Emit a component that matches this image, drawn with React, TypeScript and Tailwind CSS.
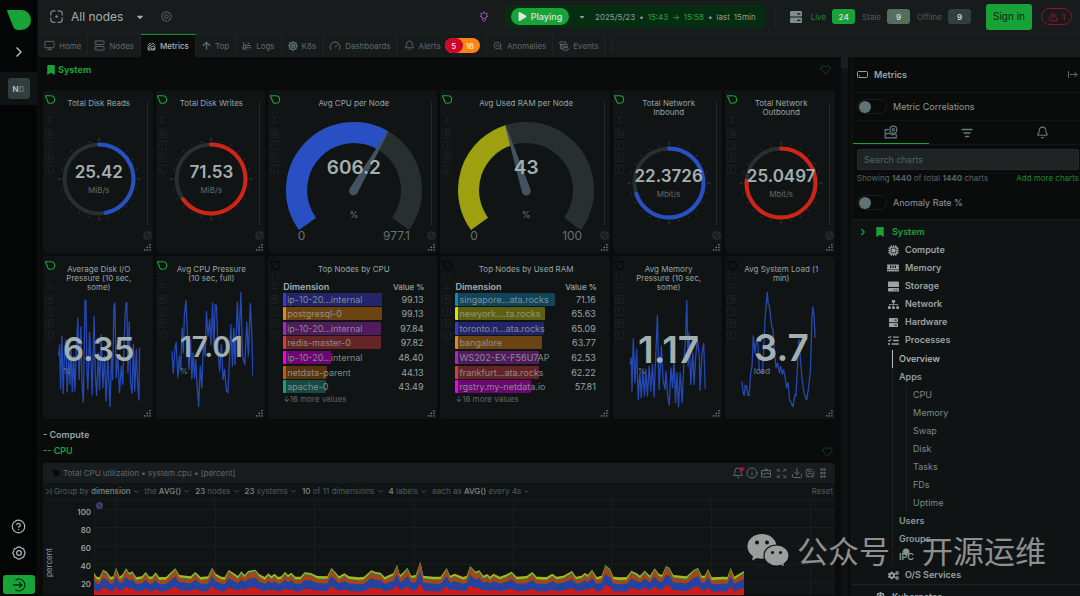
import React from "react";
import {
  Activity,
  Bell,
  ChevronDown,
  ChevronRight,
  CircleHelp,
  Download,
  Gauge,
  GripVertical,
  Heart,
  Info,
  ListFilter,
  Maximize,
  Monitor,
  Save,
  SearchX,
  Server,
  TriangleAlert,
} from "lucide-react";
import {
  FaArrowUp,
  FaBookmark,
  FaCaretDown,
  FaCogs,
  FaDharmachakra,
  FaMemory,
  FaPlay,
  FaSitemap,
} from "react-icons/fa";
import { FaListCheck, FaMicrochip } from "react-icons/fa6";

/* ---------- small drawings ---------- */

function Leaf({ className = "", filled = false }: { className?: string; filled?: boolean }) {
  return (
    <svg viewBox="0 0 24 20" className={className} aria-hidden="true">
      <path
        d="M1 1H14C19.5 1 23 5 23 10S19.5 19 14 19H11C9 19 7.900 18 7 16Z"
        fill={filled ? "currentColor" : "none"}
        stroke="currentColor"
        strokeWidth={filled ? 2 : 2.6}
        strokeLinejoin="round"
      />
    </svg>
  );
}

function NodesFrame({ className = "" }: { className?: string }) {
  return (
    <svg viewBox="0 0 26 26" className={className} fill="none" stroke="currentColor" strokeWidth="2.500" aria-hidden="true">
      <path d="M11 1.500H7A5.500 5.500 0 0 0 1.500 7V11M15 1.500H19A5.500 5.500 0 0 1 24.500 7V11M11 24.500H7A5.500 5.500 0 0 1 1.500 19V15M15 24.500H19A5.500 5.500 0 0 0 24.500 19V15" />
      <circle cx="13" cy="13" r="2.500" fill="currentColor" stroke="none" />
    </svg>
  );
}

function Cog({ className = "" }: { className?: string }) {
  return (
    <svg viewBox="0 0 24 24" className={className} fill="none" stroke="currentColor" strokeWidth="2.200" aria-hidden="true">
      <path d="M9 2.500L12 1.500L15 2.500L17 4L20 5L21 8L22.500 12L21 15.500L20 19L17 20L15 21.500L12 22.500L9 21.500L7 20L4 19L3 15.500L1.500 12L3 8L4 5L7 4Z" strokeLinejoin="round" />
      <circle cx="12" cy="12" r="4" />
    </svg>
  );
}

function MetricsIcon({ className = "" }: { className?: string }) {
  return (
    <svg viewBox="0 0 24 24" className={className} fill="none" stroke="currentColor" strokeWidth="2.500" strokeLinejoin="round" aria-hidden="true">
      <path d="M2 9L8 3L12 7L16 3L22 9M2 14L8 9L13 13L17 10L22 14M3 14V21H21V14M4 18L9 15L14 19L21 17" />
    </svg>
  );
}

function LogsIcon({ className = "" }: { className?: string }) {
  return (
    <svg viewBox="0 0 24 24" className={className} fill="none" stroke="currentColor" strokeWidth="2.500" aria-hidden="true">
      <path d="M4 3V20M4 20H11M9 7V16H15M11 11H21M14 6H18M16 16H22M1 16L4 20" />
    </svg>
  );
}

function EventsIcon({ className = "" }: { className?: string }) {
  return (
    <svg viewBox="0 0 24 24" className={className} fill="none" stroke="currentColor" strokeWidth="2.200" aria-hidden="true">
      <rect x="2" y="2" width="15" height="6" rx="1" />
      <rect x="5" y="9" width="15" height="5" rx="1" />
      <rect x="10" y="16" width="12" height="6" rx="1" />
      <path d="M4 8V19H10" />
    </svg>
  );
}

function Rosette({ className = "" }: { className?: string }) {
  return (
    <svg viewBox="0 0 24 26" className={className} fill="none" stroke="currentColor" strokeWidth="2.200" aria-hidden="true">
      <circle cx="12" cy="11" r="7" />
      <path d="M12 1V4M3 5L6 7M21 5L18 7M2 13L5 12M22 13L19 12M8 18V21L12 25L16 21V18" />
    </svg>
  );
}

function ServerSolid({ className = "", slot = "#101313" }: { className?: string; slot?: string }) {
  return (
    <svg viewBox="0 0 24 24" className={className} aria-hidden="true">
      <rect x="0" y="0" width="24" height="11" rx="2" fill="currentColor" />
      <rect x="0" y="13" width="24" height="11" rx="2" fill="currentColor" />
      <path d="M14 5.500H21M14 18.500H21" stroke={slot} strokeWidth="2.500" />
    </svg>
  );
}

function DriveSolid({ className = "" }: { className?: string }) {
  return (
    <svg viewBox="0 0 24 24" className={className} aria-hidden="true">
      <path d="M2 1H22Q24 1 24 3V13H0V3Q0 1 2 1Z" fill="currentColor" />
      <rect x="0" y="15" width="24" height="8" rx="2" fill="currentColor" />
      <path d="M13 19H15.500M18 19H20.500" stroke="#101313" strokeWidth="2.500" />
    </svg>
  );
}

function ResizeDots({ className = "" }: { className?: string }) {
  const dots = [[6, 0], [3, 3], [6, 3], [0, 6], [3, 6], [6, 6]];
  return (
    <svg viewBox="0 0 8 8" className={className} fill="currentColor" aria-hidden="true">
      {dots.map(([x, y]) => (
        <rect key={`${x}-${y}`} x={x} y={y} width="1.500" height="1.500" />
      ))}
    </svg>
  );
}

/* ---------- left rail ---------- */

function Rail() {
  return (
    <nav className="flex w-[38px] shrink-0 flex-col items-center border-r border-[#0c0f0f] bg-[#040505] text-[#a9b3b3]">
      <a href="#home" aria-label="Netdata" className="mt-[10px]">
        <Leaf filled className="h-5 w-6 text-[#18a338]" />
      </a>
      <button aria-label="Expand" className="mt-[14px]">
        <ChevronRight className="size-4" strokeWidth={2.5} />
      </button>
      <div className="mt-3 flex h-[33px] w-full items-center justify-center bg-[#0f1313]">
        <button className="h-[21px] w-[22px] rounded-[3px] bg-[#323d3f] text-[8px] font-bold text-[#b0baba]">
          N<span className="text-[#647072]">D</span>
        </button>
      </div>
      <div className="mt-auto flex w-full flex-col items-center gap-3">
        <button aria-label="Help">
          <CircleHelp className="size-[15px]" />
        </button>
        <button aria-label="Settings">
          <Cog className="size-[14px]" />
        </button>
        <button aria-label="Sign in" className="mt-[3px] mb-[2px] flex h-[19px] w-8 items-center justify-center rounded-[3px] bg-[#18a338] text-[#06280f]">
          <svg viewBox="0 0 24 24" className="size-[14px]" fill="none" stroke="currentColor" strokeWidth="2.200" aria-hidden="true">
            <path d="M6 4A10 10 0 1 1 6 20M2 12H17M12 7L17 12L12 17" />
          </svg>
        </button>
      </div>
    </nav>
  );
}

/* ---------- top bar ---------- */

function Count({ label, value, labelClass, className }: { label: string; value: number; labelClass: string; className: string }) {
  return (
    <span className="flex items-center gap-[6px]">
      <span className={`text-[8px] ${labelClass}`}>{label}</span>
      <span className={`flex h-[15px] w-[23px] items-center justify-center rounded-[3px] text-[8px] font-semibold text-[#d5dada] ${className}`}>
        {value}
      </span>
    </span>
  );
}

function TopBar() {
  return (
    <header className="flex h-[34px] shrink-0 items-center border-b border-[#1d2223] bg-[#171b1c] pr-2 pl-3">
      <button className="flex items-center gap-2 text-[12px] text-[#a4aeae]">
        <NodesFrame className="size-[13px] text-[#7c8888]" />
        All nodes
        <FaCaretDown className="ml-1 size-[10px]" />
      </button>
      <button aria-label="Node settings" className="ml-4 text-[#566062]">
        <Cog className="size-[11px]" />
      </button>
      <div className="ml-auto flex items-center">
        <Rosette className="mr-4 h-[11px] w-[10px] text-[#a35cc4]" />
        <div className="flex h-[23px] items-center rounded-[3px] bg-[#062c12] pr-[9px] pl-[6px] text-[8px]">
          <button className="flex h-[17px] w-[58px] items-center justify-center gap-1 rounded-full bg-[#18a338] text-[9px] font-medium text-[#dfe6e0]">
            <FaPlay className="size-[9px]" />
            Playing
          </button>
          <button aria-label="Play options" className="mx-[9px] text-[#8d9a9a]">
            <FaCaretDown className="size-2" />
          </button>
          <span className="flex items-center gap-1 text-[#8fa094]">
            <span>2025/5/23</span>
            <span>•</span>
            <span className="text-[#1fa341]">15:43</span>
            <span className="text-[#1fa341]">→</span>
            <span className="text-[#1fa341]">15:58</span>
            <span>•</span>
            <span>last</span>
            <span>15min</span>
          </span>
        </div>
        <span className="mx-[9px] h-[22px] w-px bg-[#1f2425]" />
        <div className="ml-[6px] flex items-center gap-[7px]">
          <ServerSolid slot="#171b1c" className="mr-[2px] size-3 text-[#7f8d8e]" />
          <Count label="Live" value={24} labelClass="text-[#178a33]" className="bg-[#18a338]" />
          <Count label="Stale" value={9} labelClass="text-[#4f5a5c]" className="bg-[#536e5c]" />
          <Count label="Offline" value={9} labelClass="text-[#4f5a5c]" className="bg-[#333e41]" />
        </div>
        <button className="ml-[15px] h-[26px] w-[46px] rounded-[3px] bg-[#18a338] text-[10px] text-[#06280f]">Sign in</button>
        <button className="ml-[9px] flex h-[17px] w-[31px] items-center justify-center gap-1 rounded-full border border-[#9c0f26] text-[8px] text-[#b3122c]">
          <TriangleAlert className="size-[10px]" />1
        </button>
      </div>
    </header>
  );
}

const tabs = [
  { name: "Home", icon: <Monitor className="size-[11px]" /> },
  { name: "Nodes", icon: <Server className="size-[11px]" /> },
  { name: "Metrics", icon: <MetricsIcon className="size-[9px]" />, active: true },
  { name: "Top", icon: <FaArrowUp className="size-[9px]" /> },
  { name: "Logs", icon: <LogsIcon className="size-[10px]" /> },
  { name: "K8s", icon: <FaDharmachakra className="size-[10px]" /> },
  { name: "Dashboards", icon: <Gauge className="size-[12px]" /> },
  { name: "Alerts", icon: <Bell className="size-[11px]" />, alerts: true },
  { name: "Anomalies", icon: <SearchX className="size-[10px]" /> },
  { name: "Events", icon: <EventsIcon className="size-[10px]" /> },
];

function Tabs() {
  return (
    <nav className="flex h-[23px] shrink-0 bg-[#171b1c] text-[8px] text-[#5c696b]">
      {tabs.map((tab) => (
        <a
          key={tab.name}
          href={`#${tab.name.toLowerCase()}`}
          className={`flex items-center gap-1 border-r border-r-[#1d2223] px-[6px] ${
            tab.active ? "border-t border-t-[#15912f] bg-[#0a0c0c] font-medium text-[#a9b3b3]" : ""
          }`}
        >
          {tab.icon}
          {tab.name}
          {tab.alerts && (
            <span className="flex h-[15px] items-center rounded-full bg-[#ff8410] pr-[6px] font-medium text-[#f0e6e0]">
              <span className="mr-[3px] flex h-[15px] w-[18px] items-center justify-center rounded-full bg-[#d0032b]">5</span>16
            </span>
          )}
        </a>
      ))}
      <span className="my-[3px] ml-[6px] w-px bg-[#1f2526]" />
    </nav>
  );
}

/* ---------- cards ---------- */

type CardProps = {
  title: string;
  lit?: boolean;
  bar?: boolean;
  sigma?: boolean;
  children: React.ReactNode;
};

function Card({ title, lit = false, bar = false, sigma = false, children }: CardProps) {
  return (
    <article className="flex h-[163px] min-w-0 rounded-[3px] bg-[#111414]">
      <div className="flex w-[13px] shrink-0 flex-col items-center pt-[5px] text-[#1e2425]">
        <Leaf className={`h-[9px] w-[10px] ${lit ? "text-[#18a338]" : "text-[#050606]"}`} />
        <Maximize className="mt-[2px] size-2" />
        <span className="text-[8px] leading-3">{sigma ? "Σ" : "⇋"}</span>
        <div className="mt-[3px] flex flex-col gap-[3px]">
          {["N", "I", "D", "L"].map((letter) => (
            <span key={letter} className="flex size-[9px] items-center justify-center rounded-[2px] border border-[#1b2122] text-[6px] leading-none font-bold">
              {letter}
            </span>
          ))}
        </div>
      </div>
      <div className="flex min-w-0 flex-1 flex-col pt-[9px]">
        <h3 className="text-center text-[8px] leading-[9px] whitespace-pre text-[#98a4a4]">{title}</h3>
        {children}
      </div>
      <div className="flex w-[11px] shrink-0 flex-col items-center pt-3 pb-[2px]">
        {bar && <span className="h-[123px] w-px bg-[#252b2b]" />}
        {bar && (
          <span className="mt-[6px] flex size-[9px] items-center justify-center rounded-full bg-[#22292a]">
            <Activity className="size-[7px] text-[#0f1212]" />
          </span>
        )}
        <ResizeDots className="mt-auto size-[7px] text-[#7f8b8b]" />
      </div>
    </article>
  );
}

function polar(cx: number, cy: number, r: number, deg: number) {
  const a = ((deg - 90) * Math.PI) / 180;
  return `${(cx + r * Math.cos(a)).toFixed(2)} ${(cy + r * Math.sin(a)).toFixed(2)}`;
}

function arc(cx: number, cy: number, r: number, from: number, to: number) {
  return `M${polar(cx, cy, r, from)}A${r} ${r} 0 ${to - from > 180 ? 1 : 0} 1 ${polar(cx, cy, r, to)}`;
}

function Ring({ value, unit, color, share }: { value: string; unit: string; color: string; share: number }) {
  return (
    <div className="relative flex flex-1 items-center justify-center pb-[4px]">
      <svg viewBox="0 0 84 84" className="size-[84px] shrink-0" fill="none" aria-hidden="true">
        {Array.from({ length: 24 }, (_, i) => (
          <path
            key={i}
            d={`M${polar(42, 42, 38, i * 15)}L${polar(42, 42, i % 6 === 0 ? 41.5 : 39.5, i * 15)}`}
            stroke="#364041"
            strokeWidth="1"
          />
        ))}
        <circle cx="42" cy="42" r="34.500" stroke="#28302f" strokeWidth="4" />
        <path d={arc(42, 42, 34.5, 0, share * 360)} stroke={color} strokeWidth="4" strokeLinecap="round" />
      </svg>
      <div className="absolute inset-0 flex flex-col items-center justify-center pb-[2px]">
        <span className="text-[17px] leading-5 font-semibold text-[#a4afaf]">{value}</span>
        <span className="text-[8px] leading-4 text-[#5f6c6e]">{unit}</span>
      </div>
    </div>
  );
}

function Dial({ value, max, share, color }: { value: string; max: string; share: number; color: string }) {
  const deg = -126 + 252 * share;
  return (
    <div className="relative flex flex-1 justify-center pt-[10px]">
      <svg viewBox="0 0 140 112" className="h-[112px] w-[140px]" fill="none" aria-hidden="true">
        <path d={arc(70, 72, 57.5, -126, 126)} stroke="#28302f" strokeWidth="21" />
        <path d={arc(70, 72, 57.5, -126, deg)} stroke={color} strokeWidth="21" />
        <path d="M69.500 6L65.500 73A4.500 4.500 0 0 0 74.500 73L70.500 6Z" fill="#43525f" transform={`rotate(${deg} 70 72)`} />
      </svg>
      <div className="absolute inset-x-0 top-[48px] text-center text-[19px] leading-6 font-semibold text-[#a4afaf]">{value}</div>
      <div className="absolute inset-x-0 top-[101px] text-center text-[9px] leading-3 text-[#6c7878]">%</div>
      <div className="absolute inset-x-0 top-[120px] flex justify-center text-[12px] leading-4 text-[#657172]">
        <div className="flex w-[112px] justify-between">
          <span>0</span>
          <span>{max}</span>
        </div>
      </div>
    </div>
  );
}

type SparkProps = { title: string; lit?: boolean; points: string; box: string; value: string; unit: string; size: string };

function SparkCard({ title, lit, points, box, value, unit, size }: SparkProps) {
  return (
    <Card title={title} lit={lit}>
      <div className="relative flex-1">
        <div className="absolute inset-x-0 bottom-[11px] pr-px pl-[2px]">
          <svg viewBox={box} preserveAspectRatio="none" className="h-[117px] w-full" fill="none" aria-hidden="true">
            <polyline points={points} stroke="#2448b4" strokeWidth="1.300" vectorEffect="non-scaling-stroke" strokeLinejoin="round" />
          </svg>
        </div>
        <div className="absolute inset-x-0 bottom-[43px] flex justify-center">
          <div className="flex flex-col">
            <span className={`font-semibold text-[#a4afaf] ${size}`}>{value}</span>
            <span className="text-[8px] leading-[10px] font-medium text-[#6c7878]">{unit}</span>
          </div>
        </div>
      </div>
    </Card>
  );
}

const diskIo =
  "66,300 69,266 72,398 76,240 80,412 84,290 88,250 92,408 97,300 101,385 104,270 108,408 112,300 116,405 120,290 125,185 129,370 134,212 138,385 142,438 147,132 150,132 153,340 156,400 161,228 166,330 169,417 175,180 179,360 183,418 188,290 192,400 197,235 202,395 207,300 212,435 217,300 224,452 229,290 232,370 236,150 239,140 243,365 248,300 253,410 259,330 263,385 270,190 273,140 276,140 279,350 283,198 287,380 292,412 296,265 300,405 305,280 309,385 313,432 315,275";
const cpuPressure =
  "403,285 407,352 412,280 416,258 421,365 426,300 430,345 434,215 438,290 441,178 446,133 450,220 455,340 460,250 464,368 468,290 472,365 476,310 480,385 485,452 490,330 495,395 500,250 505,300 509,165 514,240 519,190 523,265 528,140 532,275 536,145 540,148 545,290 550,345 555,265 560,370 565,340 570,402 575,410 579,330 584,205 589,330 593,215 597,325 604,137 609,260 615,108 620,300 627,325 633,197 638,300 644,142 648,220 652,362";
const memPressure =
  "60,325 64,305 66,405 70,248 75,380 80,280 85,430 90,350 94,425 99,345 104,420 108,340 113,420 118,330 123,405 128,325 133,422 138,300 143,178 148,400 155,270 160,370 166,400 169,345 174,420 179,447 184,335 189,395 193,315 198,440 202,350 207,452 212,350 218,440 223,325 228,250 232,133 236,330 239,230 244,385 250,290 254,385 259,300 264,250 270,300 272,403 278,290 283,262 288,398";
const sysLoad =
  "397,375 401,412 404,418 407,388 411,390 415,418 419,418 424,350 428,330 432,240 437,290 441,258 446,262 450,335 455,350 460,352 463,300 468,190 471,150 475,108 478,145 481,145 485,180 489,215 492,215 497,290 502,335 507,320 512,350 516,330 521,355 525,340 530,365 534,395 539,380 543,430 548,440 554,452 560,415 563,420 568,330 572,250 577,310 582,370 588,410 596,432 602,395 608,340 612,190 615,152 619,180 622,245";

type NodeRow = { name: string; value: string; width: number; edge: string; fill: string };

const byCpu: NodeRow[] = [
  { name: "ip-10-20...internal", value: "99.13", width: 99, edge: "#3a39dc", fill: "#24246a" },
  { name: "postgresql-0", value: "99.13", width: 99, edge: "#e88814", fill: "#6c4412" },
  { name: "ip-10-20...internal", value: "97.84", width: 98, edge: "#a62ac0", fill: "#501c5c" },
  { name: "redis-master-0", value: "97.82", width: 98, edge: "#d83c3e", fill: "#662426" },
  { name: "ip-10-20...internal", value: "48.40", width: 48, edge: "#f000f0", fill: "#6c0670" },
  { name: "netdata-parent", value: "44.13", width: 44, edge: "#c46004", fill: "#58330e" },
  { name: "apache-0", value: "43.49", width: 43, edge: "#1f9c84", fill: "#174a40" },
];

const byRam: NodeRow[] = [
  { name: "singapore...ata.rocks", value: "71.16", width: 100, edge: "#1088bc", fill: "#12455c" },
  { name: "newyork....ta.rocks", value: "65.63", width: 90, edge: "#d8dc10", fill: "#5e6010" },
  { name: "toronto.n...ata.rocks", value: "65.09", width: 89, edge: "#3a39dc", fill: "#24246a" },
  { name: "bangalore", value: "63.77", width: 87, edge: "#e88814", fill: "#6c4412" },
  { name: "WS202-EX-F56U7AP", value: "62.53", width: 84, edge: "#a62ac0", fill: "#501c5c" },
  { name: "frankfurt...ata.rocks", value: "62.22", width: 84, edge: "#d83c3e", fill: "#662426" },
  { name: "rgstry.my-netdata.io", value: "57.81", width: 76, edge: "#f000f0", fill: "#6c0670" },
];

function TopNodes({ rows }: { rows: NodeRow[] }) {
  return (
    <div className="mt-2 pr-[2px] pl-[2px] text-[#98a4a4]">
      <table className="h-[112px] w-full border-collapse text-[9px] leading-[13px]">
        <thead>
          <tr className="text-[8px] leading-[10px]">
            <th scope="col" className="p-0 text-left text-[9px] font-semibold text-[#a4afaf]">Dimension</th>
            <th scope="col" className="p-0 text-right font-medium">Value <b>%</b></th>
          </tr>
        </thead>
        <tbody>
          {rows.map((row, i) => (
            <tr key={i}>
              <td className="p-0">
                <div className="relative h-[13px] w-[100px] whitespace-nowrap">
                  <span
                    className="absolute inset-y-0 left-0 rounded-[1px] border-l-[3px]"
                    style={{ width: row.width, background: row.fill, borderColor: row.edge }}
                  />
                  <span className="relative pl-1 opacity-80">{row.name}</span>
                </div>
              </td>
              <td className="p-0 pr-px text-right">{row.value}</td>
            </tr>
          ))}
        </tbody>
      </table>
      <button className="block text-[8px] leading-[10px] text-[#5c696b]">↓16 more values</button>
    </div>
  );
}

function Overview() {
  return (
    <section className="grid grid-cols-[11fr_11fr_17fr_17fr_11fr_11fr] gap-[3px]">
      <Card title="Total Disk Reads" lit bar sigma>
        <Ring value="25.42" unit="MiB/s" color="#2850c4" share={0.47} />
      </Card>
      <Card title="Total Disk Writes" lit bar sigma>
        <Ring value="71.53" unit="MiB/s" color="#d02416" share={0.65} />
      </Card>
      <Card title="Avg CPU per Node" lit bar sigma>
        <Dial value="606.2" max="977.1" share={0.62} color="#2850c4" />
      </Card>
      <Card title="Avg Used RAM per Node" lit bar sigma>
        <Dial value="43" max="100" share={0.43} color="#9ea010" />
      </Card>
      <Card title={"Total Network\nInbound"} lit bar sigma>
        <Ring value="22.3726" unit="Mbit/s" color="#2850c4" share={0.7} />
      </Card>
      <Card title={"Total Network\nOutbound"} lit bar sigma>
        <Ring value="25.0497" unit="Mbit/s" color="#d02416" share={0.76} />
      </Card>
      <SparkCard title={"Average Disk I/O\nPressure (10 sec,\nsome)"} lit points={diskIo} box="64 104 254 352" value="6.35" unit="%" size="text-[33px] leading-[33px]" />
      <SparkCard title={"Avg CPU Pressure\n(10 sec, full)"} lit points={cpuPressure} box="400 104 254 352" value="17.01" unit="%" size="text-[28px] leading-[37px]" />
      <Card title="Top Nodes by CPU" sigma>
        <TopNodes rows={byCpu} />
      </Card>
      <Card title="Top Nodes by Used RAM" sigma>
        <TopNodes rows={byRam} />
      </Card>
      <SparkCard title={"Avg Memory\nPressure (10 sec,\nsome)"} points={memPressure} box="54 104 250 352" value="1.17" unit="%" size="text-[37px] leading-[33px]" />
      <SparkCard title={"Avg System Load (1\nmin)"} points={sysLoad} box="391 104 254 352" value="3.7" unit="load" size="text-[37px] leading-[37px]" />
    </section>
  );
}

/* ---------- stacked cpu chart ---------- */

// x, height above the idle line
const cpuTotals: [number, number][] = [
  [0, 13], [8, 1], [17, 0], [27, 22], [38, 16], [50, 0], [58, 2], [66, 28], [77, 1], [86, 8], [96, 26], [106, 12], [115, 17],
  [126, 0], [144, 2], [155, 15], [166, 1], [175, 2], [185, 14], [195, 0], [216, 0], [244, 26], [256, 6], [276, 4], [290, 2],
  [304, 15], [320, 0], [342, 2], [354, 28], [365, 10], [382, 1], [392, 0], [404, 21], [420, 11], [432, 3], [442, 17], [452, 6],
  [462, 18], [484, 22], [495, 9], [512, 0], [523, 11], [532, 3], [542, 10], [552, 0], [562, 2], [573, 16], [582, 6], [592, 13],
  [604, 1], [620, 1], [632, 14], [650, 12], [670, 3], [700, 2], [712, 27], [723, 16], [735, 2], [751, 11], [765, 2], [795, -1],
  [810, 1], [832, 20], [845, 15], [860, 13], [872, 0], [885, 6], [898, 11], [909, 36], [918, 6], [928, 14], [940, 28], [952, 4],
  [965, 6], [979, 46], [988, 4], [1018, 1], [1040, 1], [1058, 27], [1068, 4], [1082, 10], [1108, 0], [1118, 4], [1128, 33],
  [1145, 16], [1156, 20], [1168, 4], [1180, 9], [1188, 1], [1198, 10], [1218, 1], [1238, 8], [1253, 16], [1268, 1], [1298, 3],
  [1315, 15], [1328, 1], [1358, 0], [1375, 10], [1388, 1], [1408, 4], [1434, 18], [1446, 1], [1463, 4], [1473, 13], [1481, 6],
  [1494, 22], [1508, 0], [1523, 4], [1534, 36], [1548, 24], [1558, 1], [1578, -1], [1598, 0], [1612, 19], [1628, 11], [1638, 4],
  [1652, 19], [1668, 4], [1682, 26], [1694, 10], [1704, 6], [1716, 33], [1726, 28], [1738, 6], [1778, 2], [1800, 22], [1812, 27],
  [1823, 4], [1832, 4], [1842, 24], [1853, -1], [1888, 1], [1900, 0], [1910, 27], [1921, 1], [1933, 8], [1950, 18],
];

const layers = [
  { color: "#b4b410", base: 231, gain: 1 },
  { color: "#2c7878", base: 239, gain: 1.2 },
  { color: "#a8460e", base: 242, gain: 1.15 },
  { color: "#2442a0", base: 252, gain: 0.85 },
  { color: "#d01c14", base: 274, gain: 0.55 },
];

function layerPath(base: number, gain: number) {
  return `M0 285${cpuTotals.map(([x, h]) => `L${x} ${(base - h * gain).toFixed(1)}`).join("")}L1950 285Z`;
}

const filters: [string, string][][] = [
  [["Group by ", ""], ["dimension", "hi"]],
  [["the ", ""], ["AVG()", "hi"]],
  [["23 ", "hi"], ["nodes", ""]],
  [["23 ", "hi"], ["systems", ""]],
  [["10 ", "hi"], ["of 11 dimensions", ""]],
  [["4 ", "hi"], ["labels", ""]],
  [["each as ", ""], ["AVG()", "hi"], [" every 4s", ""]],
];

function CpuChart() {
  return (
    <section className="mt-1 rounded-t-[2px] bg-[#111414]">
      <div className="flex h-5 items-center rounded-t-[2px] bg-[#181c1e] pr-[6px] pl-[9px] text-[8px] text-[#5c696b]">
        <Leaf filled className="mr-[3px] h-[6px] w-[8px] text-[#060707]" />
        <h3>Total CPU utilization • system.cpu • [percent]</h3>
        <div className="ml-auto flex items-center gap-[2px]">
          <button aria-label="Alerts" className="relative">
            <Bell className="size-3" />
            <span className="absolute top-0 right-0 size-1 rounded-full bg-[#d0032b]" />
          </button>
          <button aria-label="Information"><Info className="size-3" /></button>
          <button aria-label="Change chart type">
            <svg viewBox="0 0 24 24" className="size-3" fill="none" stroke="currentColor" strokeWidth="2" aria-hidden="true">
              <path d="M3 7H21V20H3ZM7 7L12 3L17 7M3 12L8 15L13 12L21 14" />
            </svg>
          </button>
          <button aria-label="Full screen" className="px-[2px]">
            <svg viewBox="0 0 24 24" className="size-[11px]" fill="none" stroke="currentColor" strokeWidth="2" aria-hidden="true">
              <path d="M3 8V3H8M16 3H21V8M21 16V21H16M8 21H3V16M5 5L9 9M19 5L15 9M19 19L15 15M5 19L9 15" />
            </svg>
          </button>
          <button aria-label="Download"><Download className="size-3" /></button>
          <button aria-label="Save"><Save className="size-[10px]" /></button>
          <button aria-label="Move"><GripVertical className="size-3" strokeWidth={3} /></button>
        </div>
      </div>
      <div className="flex h-[17px] items-center gap-[5px] border-b border-[#171b1c] px-[2px] text-[8px] text-[#4f5b5d]">
        {filters.map((parts, i) => (
          <button key={i} className="flex items-center whitespace-pre">
            {i === 0 && (
              <svg viewBox="0 0 14 14" className="mr-[2px] size-[7px]" fill="none" stroke="currentColor" strokeWidth="2" aria-hidden="true">
                <path d="M2 2L8 7L2 12M12 1V13" />
              </svg>
            )}
            {parts.map(([text, tone]) => (
              <span key={text} className={tone === "hi" ? "font-medium text-[#7d8989]" : ""}>{text}</span>
            ))}
            <ChevronDown className="ml-[2px] size-[7px]" strokeWidth={3} />
          </button>
        ))}
        <button className="ml-auto">Reset</button>
      </div>
      <div className="flex h-[95px]">
        <div className="flex w-3 items-end justify-center pb-[18px]">
          <span className="rotate-180 text-[8px] leading-[10px] text-[#8f9b9b] [writing-mode:vertical-rl]">percent</span>
        </div>
        <div className="flex w-9 flex-col pt-[3px] text-right text-[8px] leading-[18px] font-medium text-[#a4afaf]">
          {[100, 80, 60, 40, 20].map((tick) => (
            <span key={tick}>{tick}</span>
          ))}
        </div>
        <div className="relative ml-[3px] flex-1">
          <svg viewBox="0 0 2223 285" preserveAspectRatio="none" className="h-[95px] w-full" aria-hidden="true">
            <path d="M0 28H2223M0 83H2223M0 138H2223M0 193H2223M0 248H2223" stroke="#1a1f20" strokeWidth="3" />
            <path d="M1 0V285M66 0V285M364 0V285M662 0V285M960 0V285M1258 0V285M1554 0V285M1852 0V285M2150 0V285" stroke="#1a1f20" strokeWidth="3" />
            {layers.map((layer) => (
              <path key={layer.color} d={layerPath(layer.base, layer.gain)} fill={layer.color} />
            ))}
          </svg>
          <span className="absolute top-[2px] left-[2px] flex size-[7px] items-center justify-center rounded-full bg-[#4d3c74]">
            <Activity className="size-[5px] text-[#111414]" />
          </span>
        </div>
      </div>
    </section>
  );
}

/* ---------- right panel ---------- */

function Toggle({ label }: { label: string }) {
  return (
    <label className="flex items-center gap-[6px] text-[9px] text-[#8f9b9b]">
      <input type="checkbox" role="switch" className="peer sr-only" />
      <span className="flex h-[15px] w-[30px] items-center rounded-full border border-[#1a2020] bg-[#0a0c0c] pl-px">
        <span className="size-3 rounded-full bg-[#627275]" />
      </span>
      {label}
    </label>
  );
}

const groups = [
  { name: "Compute", icon: <FaMicrochip /> },
  { name: "Memory", icon: <FaMemory className="size-3" /> },
  { name: "Storage", icon: <DriveSolid className="size-[11px]" /> },
  { name: "Network", icon: <FaSitemap /> },
  { name: "Hardware", icon: <ServerSolid className="h-[9px] w-[11px]" /> },
  { name: "Processes", icon: <FaListCheck /> },
];

function GroupLink({ name, icon }: { name: string; icon: React.ReactNode }) {
  return (
    <a href={`#${name}`} className="flex h-[18px] items-center gap-[6px] pl-[35px] text-[9px] font-semibold text-[#98a4a4]">
      <span className="flex w-3 justify-center text-[11px]">{icon}</span>
      {name}
    </a>
  );
}

function SidePanel() {
  return (
    <aside className="flex w-[229px] shrink-0 flex-col overflow-hidden border-l border-[#121616] bg-[#0a0c0c]">
      <div className="flex h-9 shrink-0 items-center gap-[6px] border-b border-[#121616] pr-[2px] pl-[5px] text-[9px] font-semibold text-[#98a4a4]">
        <svg viewBox="0 0 11 7" className="h-[7px] w-[11px]" fill="none" stroke="currentColor" aria-hidden="true">
          <rect x="0.500" y="0.500" width="10" height="6" rx="1" />
          <path d="M2 4.500H3" />
        </svg>
        Metrics
        <button aria-label="Collapse panel" className="ml-auto text-[#66787a]">
          <svg viewBox="0 0 20 14" className="h-[7px] w-[10px]" fill="none" stroke="currentColor" strokeWidth="1.800" aria-hidden="true">
            <path d="M1 0V14M4 7H18M13 2L18 7L13 12" />
          </svg>
        </button>
      </div>
      <div className="flex h-7 shrink-0 items-center border-b border-[#121616] pl-[5px]">
        <Toggle label="Metric Correlations" />
      </div>
      <div className="flex h-6 shrink-0 border-b border-[#121616] pl-px text-[#66787a]">
        <button aria-label="Charts" className="flex flex-1 items-center justify-center border-b border-[#18a338]">
          <svg viewBox="0 0 24 24" className="size-[14px]" fill="none" stroke="currentColor" strokeWidth="2" aria-hidden="true">
            <path d="M8 8H2V22H21V16M2 16L8 14L14 17L21 15" />
            <circle cx="16" cy="8" r="6" />
            <circle cx="16" cy="8" r="2" />
          </svg>
        </button>
        <button aria-label="Filters" className="flex flex-1 items-center justify-center"><ListFilter className="size-3" strokeWidth={3} /></button>
        <button aria-label="Alerts" className="flex flex-1 items-center justify-center"><Bell className="size-[13px]" /></button>
      </div>
      <div className="shrink-0 px-[5px] pt-1 pr-px">
        <input
          aria-label="Search charts"
          placeholder="Search charts"
          className="block h-[21px] w-full rounded-[2px] border border-[#252c2d] bg-[#1e2324] px-[6px] text-[9px] text-[#8f9b9b] outline-none placeholder:text-[#566264]"
        />
        <div className="flex h-4 items-center justify-between text-[8px] text-[#566264]">
          <span>Showing <b>1440</b> of total <b>1440</b> charts</span>
          <a href="#add" className="text-[#178a33]">Add more charts</a>
        </div>
      </div>
      <div className="flex h-[34px] shrink-0 items-center border-b border-[#171c1c] pl-[5px]">
        <Toggle label="Anomaly Rate %" />
      </div>
      <nav className="min-h-0 flex-1 bg-[#101313] pt-[3px]">
        <a href="#system" className="flex h-[18px] items-center pl-[6px] text-[9px] font-semibold text-[#18a338]">
          <ChevronRight className="size-[10px]" strokeWidth={3} />
          <FaBookmark className="mr-[7px] ml-[7px] size-[10px]" />
          System
        </a>
        {groups.map((group) => (
          <GroupLink key={group.name} {...group} />
        ))}
        <div className="ml-10 border-l border-[#1c2222] pt-px text-[9px] font-semibold leading-[18px] text-[#8f9b9b]">
          <a href="#overview" className="-ml-px block border-l border-[#b4c0c0] pl-[6px] font-medium text-[#b4c0c0]">Overview</a>
          <a href="#apps" className="block pl-[6px]">Apps</a>
          <div className="ml-[13px] border-l border-[#1c2222] pl-[6px] font-normal text-[#7d8989]">
            {["CPU", "Memory", "Swap", "Disk", "Tasks", "FDs", "Uptime"].map((item) => (
              <a key={item} href={`#${item}`} className="block">{item}</a>
            ))}
          </div>
          {["Users", "Groups", "IPC"].map((item) => (
            <a key={item} href={`#${item}`} className="block pl-[6px]">{item}</a>
          ))}
        </div>
        <GroupLink name="O/S Services" icon={<FaCogs />} />
        <a href="#kubernetes" className="flex h-6 items-center gap-[7px] border-t border-[#1c2222] pl-6 text-[9px] font-semibold text-[#98a4a4]">
          <FaDharmachakra className="size-[9px]" />
          Kubernetes
        </a>
      </nav>
    </aside>
  );
}

/* ---------- watermark ---------- */

function Watermark() {
  return (
    <div className="pointer-events-none absolute right-[34px] bottom-[24px] flex items-center text-[31px] leading-[44px] font-normal text-[#8e9090] [font-family:'Noto_Sans_CJK_SC',sans-serif]">
      <svg viewBox="0 0 42 35" className="mr-2 h-[35px] w-[42px]" aria-hidden="true">
        <path d="M15 1C6.500 1 0.500 6.500 0.500 13.500C0.500 17.500 2.500 21 6 23.300L5 27.500L10 25C11.500 25.500 13 25.700 15 25.700C23 25.700 29.500 20.500 29.500 13.500C29.500 6.500 23 1 15 1Z" fill="#9c9e9e" />
        <path d="M29.500 12C22.500 12 17 16.500 17 22.500C17 28.500 22.500 33 29.500 33C31 33 32.500 32.800 34 32.300L38 34.500L37 31C40 29 42 26 42 22.500C42 16.500 36.500 12 29.500 12Z" fill="#9c9e9e" stroke="#111414" strokeWidth="1.200" />
        <g fill="#111414">
          <circle cx="10" cy="9.500" r="2" />
          <circle cx="20" cy="9.500" r="2" />
          <circle cx="25.500" cy="19.500" r="1.600" />
          <circle cx="33.500" cy="19.500" r="1.600" />
        </g>
      </svg>
      <span>公众号</span>
      <span className="flex w-8 justify-center">·</span>
      <span>开源运维</span>
    </div>
  );
}

export default function App() {
  return (
    <div className="relative flex h-screen overflow-hidden bg-[#0a0c0c] text-[#9aa6a6] [font-family:Inter,'Noto_Sans_CJK_SC',sans-serif]">
      <Rail />
      <div className="flex min-w-0 flex-1 flex-col">
        <TopBar />
        <Tabs />
        <div className="flex min-h-0 flex-1">
          <main className="min-w-0 flex-1 overflow-hidden pr-[6px] pl-[5px]">
            <div className="flex h-[33px] items-start justify-between pt-[7px] pr-1">
              <h2 className="flex items-center gap-[2px] pl-[3px] text-[9px] leading-3 font-bold text-[#18a338]">
                <FaBookmark className="size-[10px]" />
                System
              </h2>
              <button aria-label="Favourite System" className="text-[#124a1f]"><Heart className="size-[11px]" /></button>
            </div>
            <Overview />
            <h2 className="mt-2 text-[9px] leading-4 font-semibold text-[#98a4a4]">- Compute</h2>
            <div className="flex h-4 items-center justify-between pr-[2px]">
              <h3 className="text-[9px] font-semibold text-[#18a338]">-- CPU</h3>
              <button aria-label="Favourite CPU" className="text-[#124a1f]"><Heart className="size-[11px]" /></button>
            </div>
            <CpuChart />
          </main>
          <div className="mr-[3px] w-[7px] shrink-0 bg-[#0f1212]">
            <div className="h-3 rounded-b-[3px] bg-[#1a1e1f]" />
          </div>
          <SidePanel />
        </div>
      </div>
      <Watermark />
    </div>
  );
}
